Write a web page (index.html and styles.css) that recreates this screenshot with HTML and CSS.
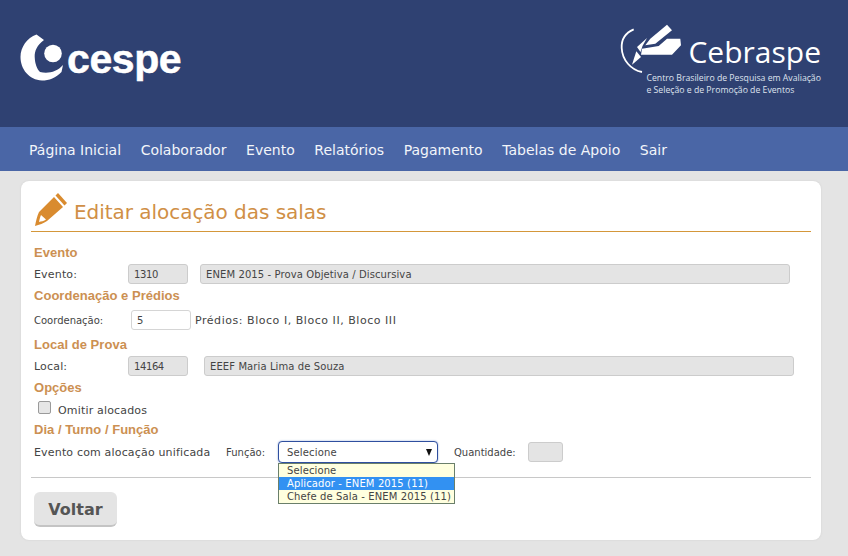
FILE: index.html
```html
<!DOCTYPE html>
<html lang="pt-BR">
<head>
  <meta charset="UTF-8">
  <meta name="viewport" content="width=device-width, initial-scale=1.0">
  <title>Editar alocação das salas</title>
  <link rel="stylesheet" href="styles.css">
</head>
<body>

  <!-- Header -->
  <header class="top">
    <div class="logo-cespe">
      <svg class="cespe-mark" width="50" height="54" viewBox="0 0 50 54">
        <path fill="#fff" d="M18.500 4.500 L26 10 C19 15 16.500 21 16.700 27 C17 34 19 39 22 42 C30 44 39 42 45 35 L43.500 42 C38 48 31 50.500 24 50.500 C11 50 2.500 39 2.500 27 C2.500 17 9 8 18.500 4.500 Z"/>
        <circle fill="#fff" cx="35" cy="23.500" r="8.800"/>
      </svg>
      <span class="cespe-text">cespe</span>
    </div>
    <div class="logo-cebraspe">
      <div class="cebraspe-top">
        <svg width="70" height="54" viewBox="0 0 70 54">
          <path fill="none" stroke="#fff" stroke-width="1.800" d="M16.700 7.300 C8 11 4.300 18 4.700 26 C5.200 38 14 48 25 50"/>
          <path fill="#fff" d="M50 2.700 L55 8.300 L38.300 21.700 L28.300 23.300 L33.300 16.700 Z"/>
          <path fill="#fff" d="M20 25 L30 16 L25.500 24 L23.500 30 Z"/>
          <path fill="#fff" d="M50 16.700 L63.300 16.700 L64 23.300 L55 32.700 L24 32.700 L25 26.700 L41.700 24 Z"/>
          <path fill="#fff" d="M19.300 29.300 L24 35 L15 42.700 Z"/>
        </svg>
        <span class="cebraspe-name">Cebraspe</span>
      </div>
      <p class="cebraspe-sub">Centro Brasileiro de Pesquisa em Avaliação<br>e Seleção e de Promoção de Eventos</p>
    </div>
  </header>

  <!-- Menu -->
  <nav class="menu">
    <a href="#">Página Inicial</a>
    <a href="#">Colaborador</a>
    <a href="#">Evento</a>
    <a href="#">Relatórios</a>
    <a href="#">Pagamento</a>
    <a href="#">Tabelas de Apoio</a>
    <a href="#">Sair</a>
  </nav>

  <!-- Card -->
  <main class="card">
    <div class="page-title">
      <svg width="32" height="33" viewBox="0 0 32 33">
        <path fill="#d98b2f" d="M23 0 L32 10 L29.500 12.500 L20.500 2.500 Z"/>
        <path fill="#d98b2f" fill-rule="evenodd" d="M19 4 L28 14 L12 28 C9 30 4 32 0 33 C1 28 2 23 4 19 Z M6 22 C5 24 4.500 27 4 29 C6 28.500 9 28 11 26.500 Z"/>
      </svg>
      <h1>Editar alocação das salas</h1>
    </div>

    <h2>Evento</h2>
    <div class="row">
      <label class="lbl">Evento:</label>
      <input class="field short off" type="text" value="1310" disabled>
      <input class="field wide off" type="text" value="ENEM 2015 - Prova Objetiva / Discursiva" disabled>
    </div>

    <h2>Coordenação e Prédios</h2>
    <div class="row row-coord">
      <label class="lbl lbl-small">Coordenação:</label>
      <input class="field short" type="text" value="5">
      <span class="predios">Prédios: Bloco I, Bloco II, Bloco III</span>
    </div>

    <h2>Local de Prova</h2>
    <div class="row row-local">
      <label class="lbl">Local:</label>
      <input class="field short off" type="text" value="14164" disabled>
      <input class="field wide off" type="text" value="EEEF Maria Lima de Souza" disabled>
    </div>

    <h2>Opções</h2>
    <div class="check-row">
      <span class="check"></span>
      <span>Omitir alocados</span>
    </div>

    <h2>Dia / Turno / Função</h2>
    <div class="row row-dia">
      <span class="unificada">Evento com alocação unificada</span>
      <span class="lbl-small funcao">Função:</span>
      <div class="combo">
        <div class="combo-box"><span>Selecione</span><span class="arrow"></span></div>
        <ul class="combo-list">
          <li>Selecione</li>
          <li class="sel">Aplicador - ENEM 2015 (11)</li>
          <li>Chefe de Sala - ENEM 2015 (11)</li>
        </ul>
      </div>
      <span class="lbl-small qtd">Quantidade:</span>
      <input class="field tiny off" type="text" disabled>
    </div>

    <hr class="sep">
    <button class="btn" type="button">Voltar</button>
  </main>

</body>
</html>
```

FILE: styles.css
```css
/* General */
body {
  margin: 0;
  background-color: #e4e4e4;
  font-family: 'DejaVu Sans', Verdana, sans-serif;
  font-size: 11px;
  letter-spacing: 0.17px;
  color: #444;
  height: 556px;
  overflow: hidden;
}

/* Header */
.top {
  height: 127px;
  background-color: #2f4172;
  display: flex;
  justify-content: space-between;
  box-sizing: border-box;
  padding: 22px 27px 0 18px;
}
.logo-cespe {
  display: flex;
  align-items: flex-start;
  padding-top: 8px;
}
.cespe-mark {
  flex: none;
}
.cespe-text {
  font-family: 'Liberation Sans', Arial, sans-serif;
  font-weight: bold;
  font-size: 41px;
  line-height: 48px;
  color: #fff;
  letter-spacing: -0.4px;
  margin-left: -1px;
  margin-top: 5px;
  -webkit-text-stroke: 0.5px #fff;
}
.logo-cebraspe {
  color: #fff;
  letter-spacing: 0;
}
.cebraspe-top {
  display: flex;
  align-items: flex-start;
  margin-left: -29px;
}
.cebraspe-name {
  font-family: 'Open Sans', sans-serif;
  font-size: 30px;
  line-height: 38px;
  margin-top: 11px;
  margin-left: 1px;
}
.cebraspe-sub {
  margin: -3px 0 0 0;
  font-family: 'Open Sans', sans-serif;
  font-size: 8.700px;
  line-height: 11.500px;
  color: #dfe3ee;
}

/* Menu */
.menu {
  height: 44px;
  box-sizing: border-box;
  padding: 1px 0 0 29px;
  background-color: #4a66a6;
  display: flex;
  align-items: center;
  gap: 19.600px;
}
.menu a {
  color: #f2f5fa;
  text-decoration: none;
  font-size: 14px;
  letter-spacing: 0;
}

/* Card */
.card {
  margin: 10px 27px 16px 21px;
  height: 359px;
  box-sizing: border-box;
  background-color: #fff;
  border-radius: 8px;
  padding: 12px 10px 0 10px;
  box-shadow: 0 0 2px #ccc;
}
.page-title {
  display: flex;
  align-items: flex-end;
  gap: 7px;
  height: 38px;
  padding-left: 4px;
  border-bottom: 1px solid #d4973a;
}
.page-title svg {
  margin-bottom: 5px;
}
h1 {
  margin: 0 0 7px 0;
  font-weight: normal;
  font-size: 20px;
  line-height: 24px;
  letter-spacing: -0.04px;
  color: #d08f46;
}
h2 {
  margin: 0 0 -1px 0;
  padding: 1px 0 0 3px;
  font-family: 'Liberation Sans', Arial, sans-serif;
  font-size: 13px;
  font-weight: bold;
  line-height: 16px;
  letter-spacing: 0.03px;
  color: #cc9052;
}
.page-title + h2 {
  margin-top: 12px;
}

/* Form rows */
.row {
  display: flex;
  align-items: center;
  height: 20px;
  padding-left: 3px;
  margin: 4px 0 3px 0;
}
.lbl {
  width: 94px;
  flex: none;
}
.lbl-small {
  font-size: 10px;
  letter-spacing: 0;
}
.field {
  box-sizing: border-box;
  height: 20px;
  border: 1px solid #d5d5d5;
  border-radius: 3px;
  background-color: #fff;
  padding: 0 5px;
  font-family: inherit;
  font-size: 10px;
  letter-spacing: 0.1px;
  color: #444;
  margin: 0;
}
.off {
  background-color: #e4e4e4;
  border-color: #ccc;
}
.short {
  width: 60px;
  letter-spacing: -0.4px;
}
.wide {
  width: 590px;
  margin-left: 12px;
}
.tiny {
  width: 35px;
}
.row-coord {
  margin-top: 7px;
  margin-bottom: 6px;
}
.row-coord .lbl {
  width: 97px;
}
.predios {
  margin-left: 4px;
  letter-spacing: 0.54px;
}
.row-local .wide {
  margin-left: 16px;
}
.check-row {
  display: flex;
  align-items: center;
  gap: 7px;
  height: 16px;
  padding-left: 7px;
  margin: 7px 0 3px 0;
}
.check {
  width: 11px;
  height: 11px;
  border: 1px solid #9a9a9a;
  border-radius: 2px;
  background-color: #e6e6e6;
  margin-top: -5px;
}

/* Select */
.row-dia {
  margin-top: 5px;
}
.unificada {
  width: 192px;
  flex: none;
}
.funcao {
  width: 52px;
  flex: none;
}
.combo {
  position: relative;
  width: 160px;
  flex: none;
}
.combo-box {
  box-sizing: border-box;
  height: 22px;
  border: 1px solid #2f4f9f;
  border-radius: 4px;
  background-color: #fff;
  display: flex;
  align-items: center;
  justify-content: space-between;
  padding: 0 5px 0 8px;
  font-size: 10px;
  box-shadow: 0 0 2px #8fa6d8;
}
.arrow {
  width: 0;
  height: 0;
  border-left: 3.500px solid transparent;
  border-right: 3.500px solid transparent;
  border-top: 7px solid #111;
}
.combo-list {
  position: absolute;
  top: 22px;
  left: 0;
  width: 177px;
  box-sizing: border-box;
  margin: 0;
  padding: 0;
  list-style: none;
  border: 1px solid #6a7f6a;
  background-color: #ffffdf;
  font-size: 10px;
  line-height: 13px;
  letter-spacing: 0.12px;
}
.combo-list li {
  padding-left: 8px;
  height: 13px;
  white-space: nowrap;
}
.combo-list .sel {
  background-color: #3291f2;
  color: #fff;
}
.qtd {
  margin-left: 16px;
  width: 74px;
  flex: none;
}

/* Bottom */
.sep {
  border: 0;
  border-top: 1px solid #c8c8c8;
  margin: 15px 0 14px 0;
}
.btn {
  display: block;
  margin-left: 3px;
  width: 83px;
  height: 35px;
  border: 0;
  border-bottom: 2px solid #c4c4c4;
  border-radius: 6px;
  background-color: #e4e4e4;
  font-family: inherit;
  font-size: 16px;
  font-weight: bold;
  color: #555;
  padding: 1px 0 0 0;
}
```
